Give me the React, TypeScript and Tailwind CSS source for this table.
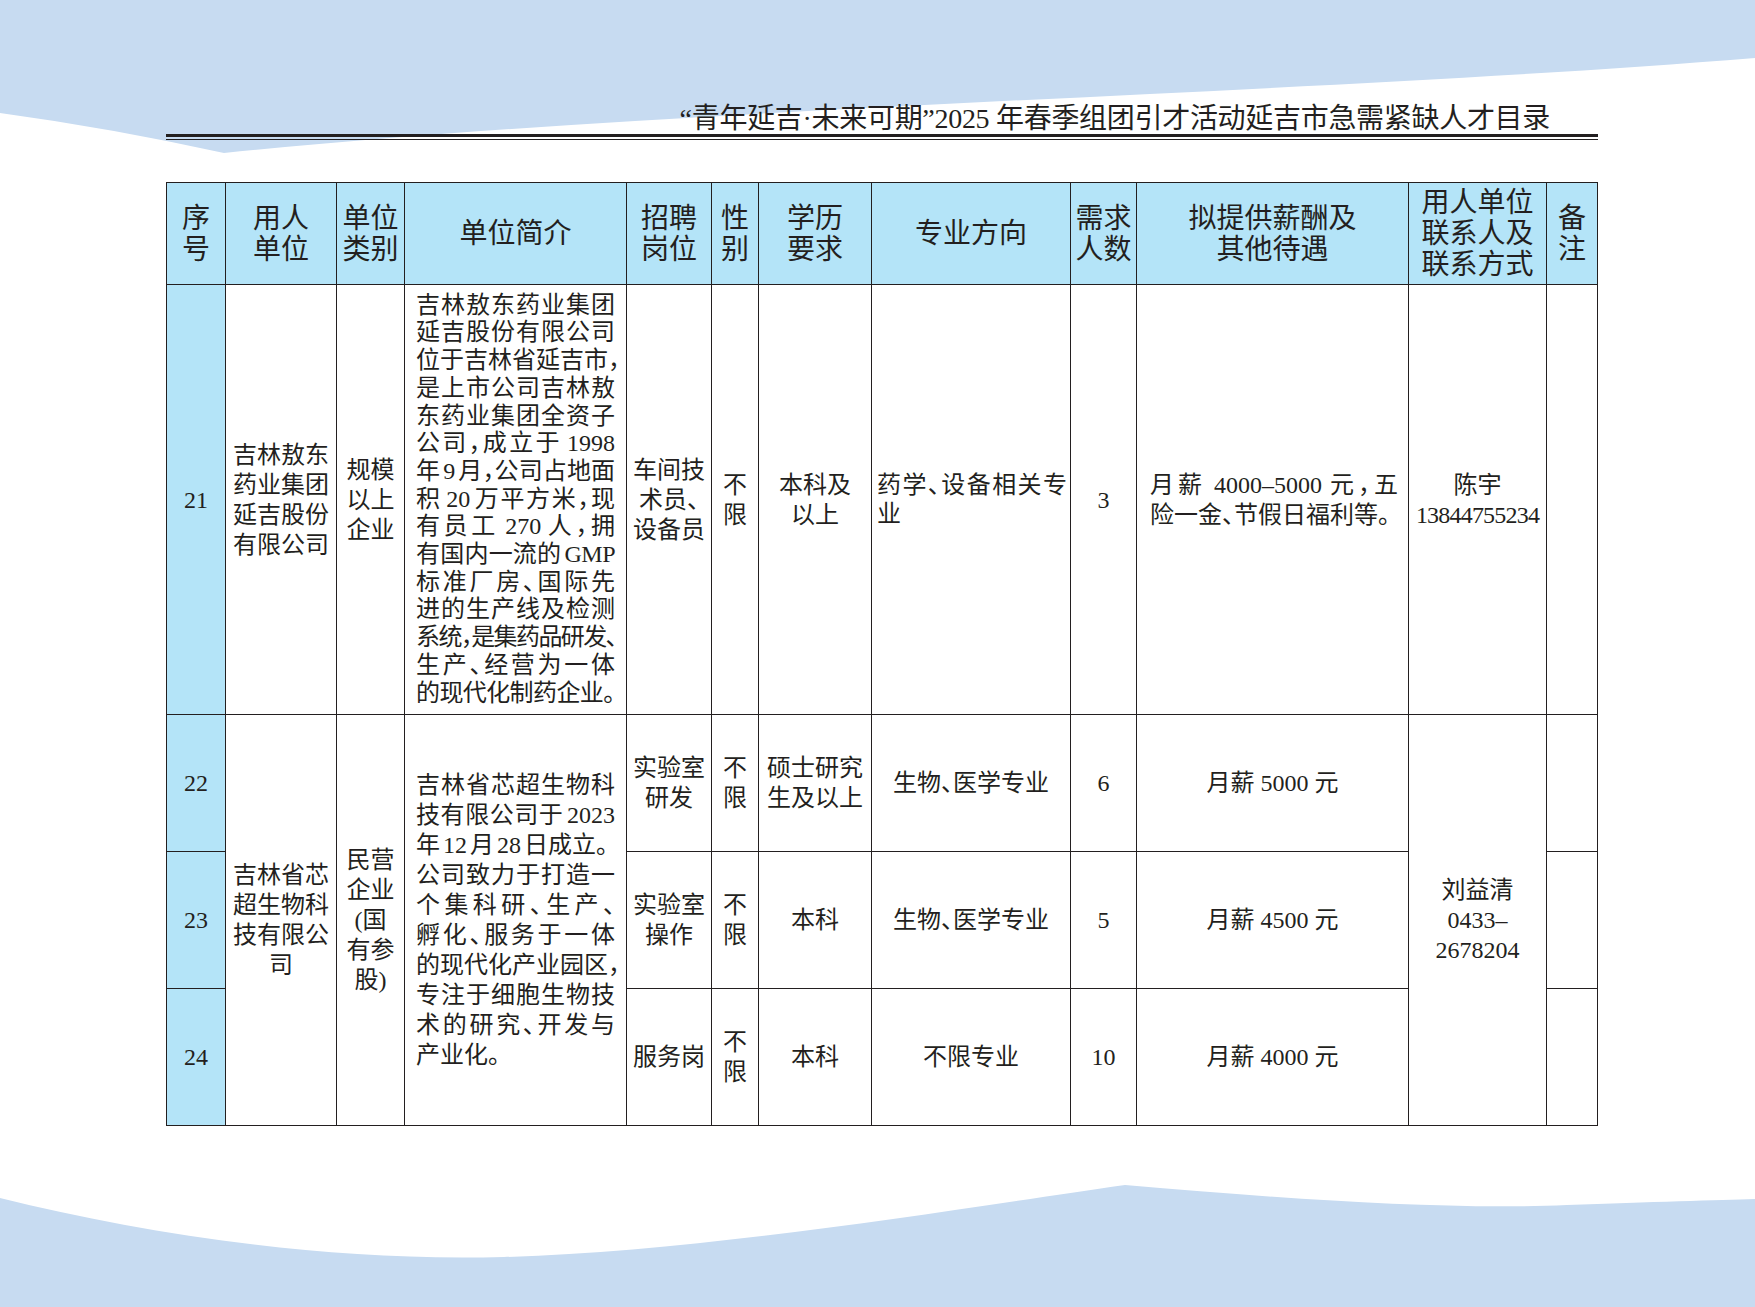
import React from "react";

const HEAD = "bg-[#b4e4f8] flex flex-col items-center justify-center text-center text-[28px] leading-[31px]";
const BODY = "bg-white flex flex-col items-center justify-center text-center text-[24px] leading-[30px]";
const SEQ = "bg-[#b4e4f8] flex flex-col items-center justify-center text-center text-[24px] leading-[30px]";

function Lines({ lines }: { lines: string[] }) {
  return (
    <>
      {lines.map((l, i) => (
        <div key={i} className="whitespace-nowrap">
          {l}
        </div>
      ))}
    </>
  );
}

function Cell({ cls, lines, extra = "" }: { cls: string; lines: string[]; extra?: string }) {
  return (
    <div className={cls + " " + extra}>
      <Lines lines={lines} />
    </div>
  );
}

function Intro({ lines, extra, lh }: { lines: { t: string; j: boolean; c?: string }[]; extra: string; lh: string }) {
  return (
    <div className={"bg-white flex flex-col justify-center px-[11px] text-[24px] [word-spacing:-3px] " + lh + " " + extra}>
      {lines.map((l, i) => (
        <div
          key={i}
          className={
            "whitespace-nowrap " +
            (l.j ? "text-justify [text-align-last:justify] " : "text-left ") +
            (l.c ?? "")
          }
        >
          {l.t}
        </div>
      ))}
    </div>
  );
}

const intro1 = [
  { t: "吉林敖东药业集团", j: true },
  { t: "延吉股份有限公司", j: true },
  { t: "位于吉林省延吉市，", j: false },
  { t: "是上市公司吉林敖", j: true },
  { t: "东药业集团全资子", j: true },
  { t: "公司，成立于 1998", j: true },
  { t: "年 9 月，公司占地面", j: true },
  { t: "积 20 万平方米，现", j: true },
  { t: "有员工 270 人，拥", j: true },
  { t: "有国内一流的 GMP", j: true, c: "tracking-[-0.5px]" },
  { t: "标准厂房、国际先", j: true },
  { t: "进的生产线及检测", j: true },
  { t: "系统，是集药品研发、", j: false, c: "tracking-[-1.6px]" },
  { t: "生产、经营为一体", j: true },
  { t: "的现代化制药企业。", j: false, c: "tracking-[-0.6px]" },
];

const intro2 = [
  { t: "吉林省芯超生物科", j: true },
  { t: "技有限公司于 2023", j: true },
  { t: "年 12 月 28 日成立。", j: false },
  { t: "公司致力于打造一", j: true },
  { t: "个集科研、生产、", j: true },
  { t: "孵化、服务于一体", j: true },
  { t: "的现代化产业园区，", j: false },
  { t: "专注于细胞生物技", j: true },
  { t: "术的研究、开发与", j: true },
  { t: "产业化。", j: false },
];

export default function App() {
  return (
    <div className="relative w-[1755px] h-[1307px] overflow-hidden bg-white font-['Liberation_Serif','Noto_Sans_CJK_SC',serif] text-[#231f20] [font-feature-settings:'halt']">
      <svg className="absolute inset-0" width="1755" height="1307" viewBox="0 0 1755 1307">
        <path
          d="M0,0 H1755 V58 C1300,95 700,105 224,153 Q110,128 0,113 Z"
          fill="#c7dbf1"
        />
        <path
          d="M0,1198 C150,1235 330,1262 504,1257 C700,1252 950,1210 1125,1185 C1300,1200 1450,1210 1567,1205 C1650,1202 1720,1200 1755,1199 V1307 H0 Z"
          fill="#c7dbf1"
        />
      </svg>
      <div className="relative pt-[103px] pl-[166px]">
        <div className="w-[1432px]">
          <div className="flex justify-end pr-[48px] h-[32px] text-[28px] leading-[32px] whitespace-nowrap tracking-[-0.3px]">
            “青年延吉·未来可期”2025 年春季组团引才活动延吉市急需紧缺人才目录
          </div>
          <div className="mt-[-1px] h-[3px] bg-[#231f20]" />
          <div className="mt-[2px] h-px bg-[#231f20]" />
          <div className="mt-[42px] grid grid-cols-[58px_110px_67px_221px_84px_46px_112px_198px_65px_271px_137px_50px] grid-rows-[101px_429px_136px_136px_136px] gap-px p-px bg-[#231f20]">
            {/* header */}
            <Cell cls={HEAD} lines={["序", "号"]} />
            <Cell cls={HEAD} lines={["用人", "单位"]} />
            <Cell cls={HEAD} lines={["单位", "类别"]} />
            <Cell cls={HEAD} lines={["单位简介"]} />
            <Cell cls={HEAD} lines={["招聘", "岗位"]} />
            <Cell cls={HEAD} lines={["性", "别"]} />
            <Cell cls={HEAD} lines={["学历", "要求"]} />
            <Cell cls={HEAD} lines={["专业方向"]} />
            <Cell cls={HEAD} lines={["需求", "人数"]} />
            <Cell cls={HEAD} lines={["拟提供薪酬及", "其他待遇"]} />
            <Cell cls={HEAD} lines={["用人单位", "联系人及", "联系方式"]} />
            <Cell cls={HEAD} lines={["备", "注"]} />

            {/* row 21 */}
            <Cell cls={SEQ} lines={["21"]} />
            <Cell cls={BODY} lines={["吉林敖东", "药业集团", "延吉股份", "有限公司"]} extra="leading-[29px]" />
            <Cell cls={BODY} lines={["规模", "以上", "企业"]} extra="leading-[29px]" />
            <Intro lines={intro1} extra="" lh="leading-[27.7px]" />
            <Cell cls={BODY} lines={["车间技", "术员、", "设备员"]} extra="leading-[29.5px]" />
            <Cell cls={BODY} lines={["不", "限"]} />
            <Cell cls={BODY} lines={["本科及", "以上"]} />
            <div className="bg-white flex flex-col justify-center pl-[5px] pr-[3px] text-[24px] leading-[29px]">
              <div className="whitespace-nowrap text-justify [text-align-last:justify]">药学、设备相关专</div>
              <div className="whitespace-nowrap text-left">业</div>
            </div>
            <Cell cls={BODY} lines={["3"]} />
            <div className="bg-white flex flex-col justify-center pl-[13px] pr-[10px] text-[24px] leading-[30px] [word-spacing:-2px]">
              <div className="whitespace-nowrap text-justify [text-align-last:justify]">月薪 4000–5000 元，五</div>
              <div className="whitespace-nowrap text-left">险一金、节假日福利等。</div>
            </div>
            <div className={BODY}>
              <div className="whitespace-nowrap">陈宇</div>
              <div className="whitespace-nowrap tracking-[-0.8px]">13844755234</div>
            </div>
            <div className="bg-white" />

            {/* row 22 */}
            <Cell cls={SEQ} lines={["22"]} />
            <Cell cls={BODY} lines={["吉林省芯", "超生物科", "技有限公", "司"]} extra="row-span-3" />
            <Cell cls={BODY} lines={["民营", "企业", "(国", "有参", "股)"]} extra="row-span-3" />
            <Intro lines={intro2} extra="row-span-3" lh="leading-[30px]" />
            <Cell cls={BODY} lines={["实验室", "研发"]} />
            <Cell cls={BODY} lines={["不", "限"]} />
            <Cell cls={BODY} lines={["硕士研究", "生及以上"]} />
            <Cell cls={BODY} lines={["生物、医学专业"]} />
            <Cell cls={BODY} lines={["6"]} />
            <Cell cls={BODY} lines={["月薪 5000 元"]} />
            <div className={BODY + " row-span-3"}>
              <div className="whitespace-nowrap">刘益清</div>
              <div className="whitespace-nowrap">0433–</div>
              <div className="whitespace-nowrap">2678204</div>
            </div>
            <div className="bg-white" />

            {/* row 23 */}
            <Cell cls={SEQ} lines={["23"]} />
            <Cell cls={BODY} lines={["实验室", "操作"]} />
            <Cell cls={BODY} lines={["不", "限"]} />
            <Cell cls={BODY} lines={["本科"]} />
            <Cell cls={BODY} lines={["生物、医学专业"]} />
            <Cell cls={BODY} lines={["5"]} />
            <Cell cls={BODY} lines={["月薪 4500 元"]} />
            <div className="bg-white" />

            {/* row 24 */}
            <Cell cls={SEQ} lines={["24"]} />
            <Cell cls={BODY} lines={["服务岗"]} />
            <Cell cls={BODY} lines={["不", "限"]} />
            <Cell cls={BODY} lines={["本科"]} />
            <Cell cls={BODY} lines={["不限专业"]} />
            <Cell cls={BODY} lines={["10"]} />
            <Cell cls={BODY} lines={["月薪 4000 元"]} />
            <div className="bg-white" />
          </div>
        </div>
      </div>
    </div>
  );
}
